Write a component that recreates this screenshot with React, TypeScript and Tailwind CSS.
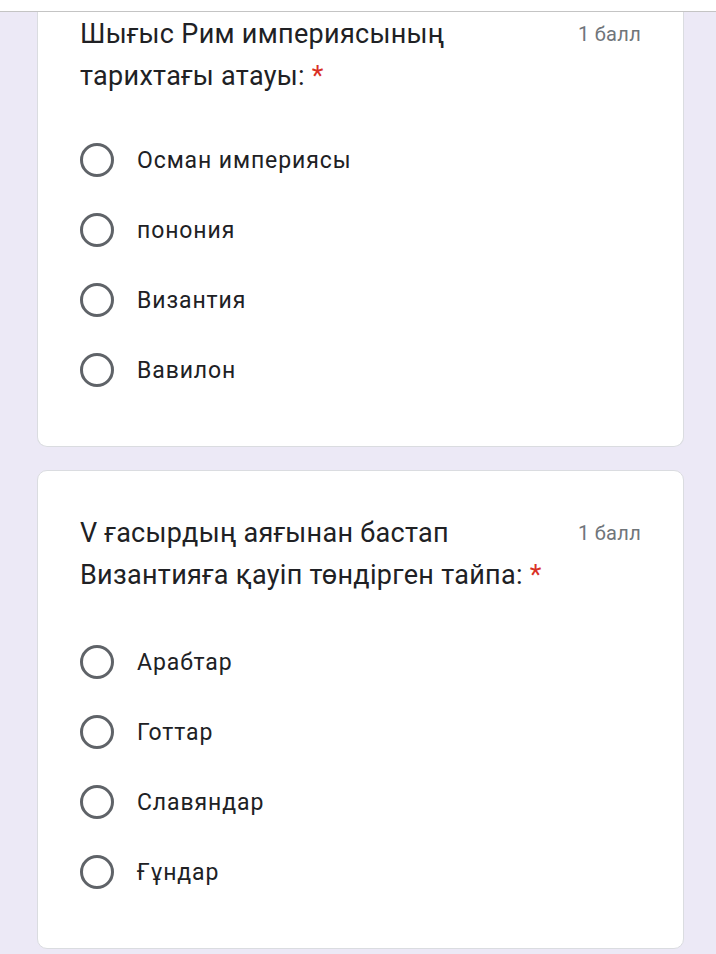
import React from "react";

const Radio = ({ label }: { label: string }) => (
  <div className="flex h-[70px] items-center">
    <div className="h-[34px] w-[34px] shrink-0 rounded-full border-[3px] border-[#5f6368]" />
    <span className="ml-[23px] text-[23px] leading-none tracking-[0.9px] text-[#202124]">{label}</span>
  </div>
);

const Card = ({
  lines,
  options,
  top,
}: {
  lines: string[];
  options: string[];
  top: boolean;
}) => (
  <div
    className={
      top
        ? "ml-[37px] mr-[32px] border-x border-b border-[#dadce0] bg-white rounded-b-[10px] pl-[42px] pr-[42px] pt-[1px] pb-[41px]"
        : "ml-[37px] mr-[32px] border border-[#dadce0] bg-white rounded-[10px] pl-[42px] pr-[42px] pt-[41px] pb-[41px]"
    }
  >
    <div className="flex items-start justify-between">
      <div className="text-[27px] leading-[42px] tracking-[0.3px] text-[#202124]">
        {lines.map((l, i) => (
          <div key={i}>
            {l}
            {i === lines.length - 1 && <span className="text-[#d93025]"> *</span>}
          </div>
        ))}
      </div>
      <div className="pt-[11px] text-[20px] leading-none tracking-[0.3px] text-[#70757a] whitespace-nowrap">1 балл</div>
    </div>
    <div className={top ? "mt-[28px] flex flex-col" : "mt-[31px] flex flex-col"}>
      {options.map((o) => (
        <Radio key={o} label={o} />
      ))}
    </div>
  </div>
);

export default function App() {
  return (
    <div
      className="min-h-[954px] w-[716px] bg-[#ece9f6]"
      style={{ fontFamily: "Roboto, 'Noto Sans', sans-serif" }}
    >
      <div className="h-[12px] bg-white border-b border-[#c4c4c4]" />
      <Card
        top
        lines={["Шығыс Рим империясының", "тарихтағы атауы:"]}
        options={["Осман империясы", "понония", "Византия", "Вавилон"]}
      />
      <div className="h-[23px]" />
      <Card
        top={false}
        lines={["V ғасырдың аяғынан бастап", "Византияға қауіп төндірген тайпа:"]}
        options={["Арабтар", "Готтар", "Славяндар", "Ғұндар"]}
      />
    </div>
  );
}
